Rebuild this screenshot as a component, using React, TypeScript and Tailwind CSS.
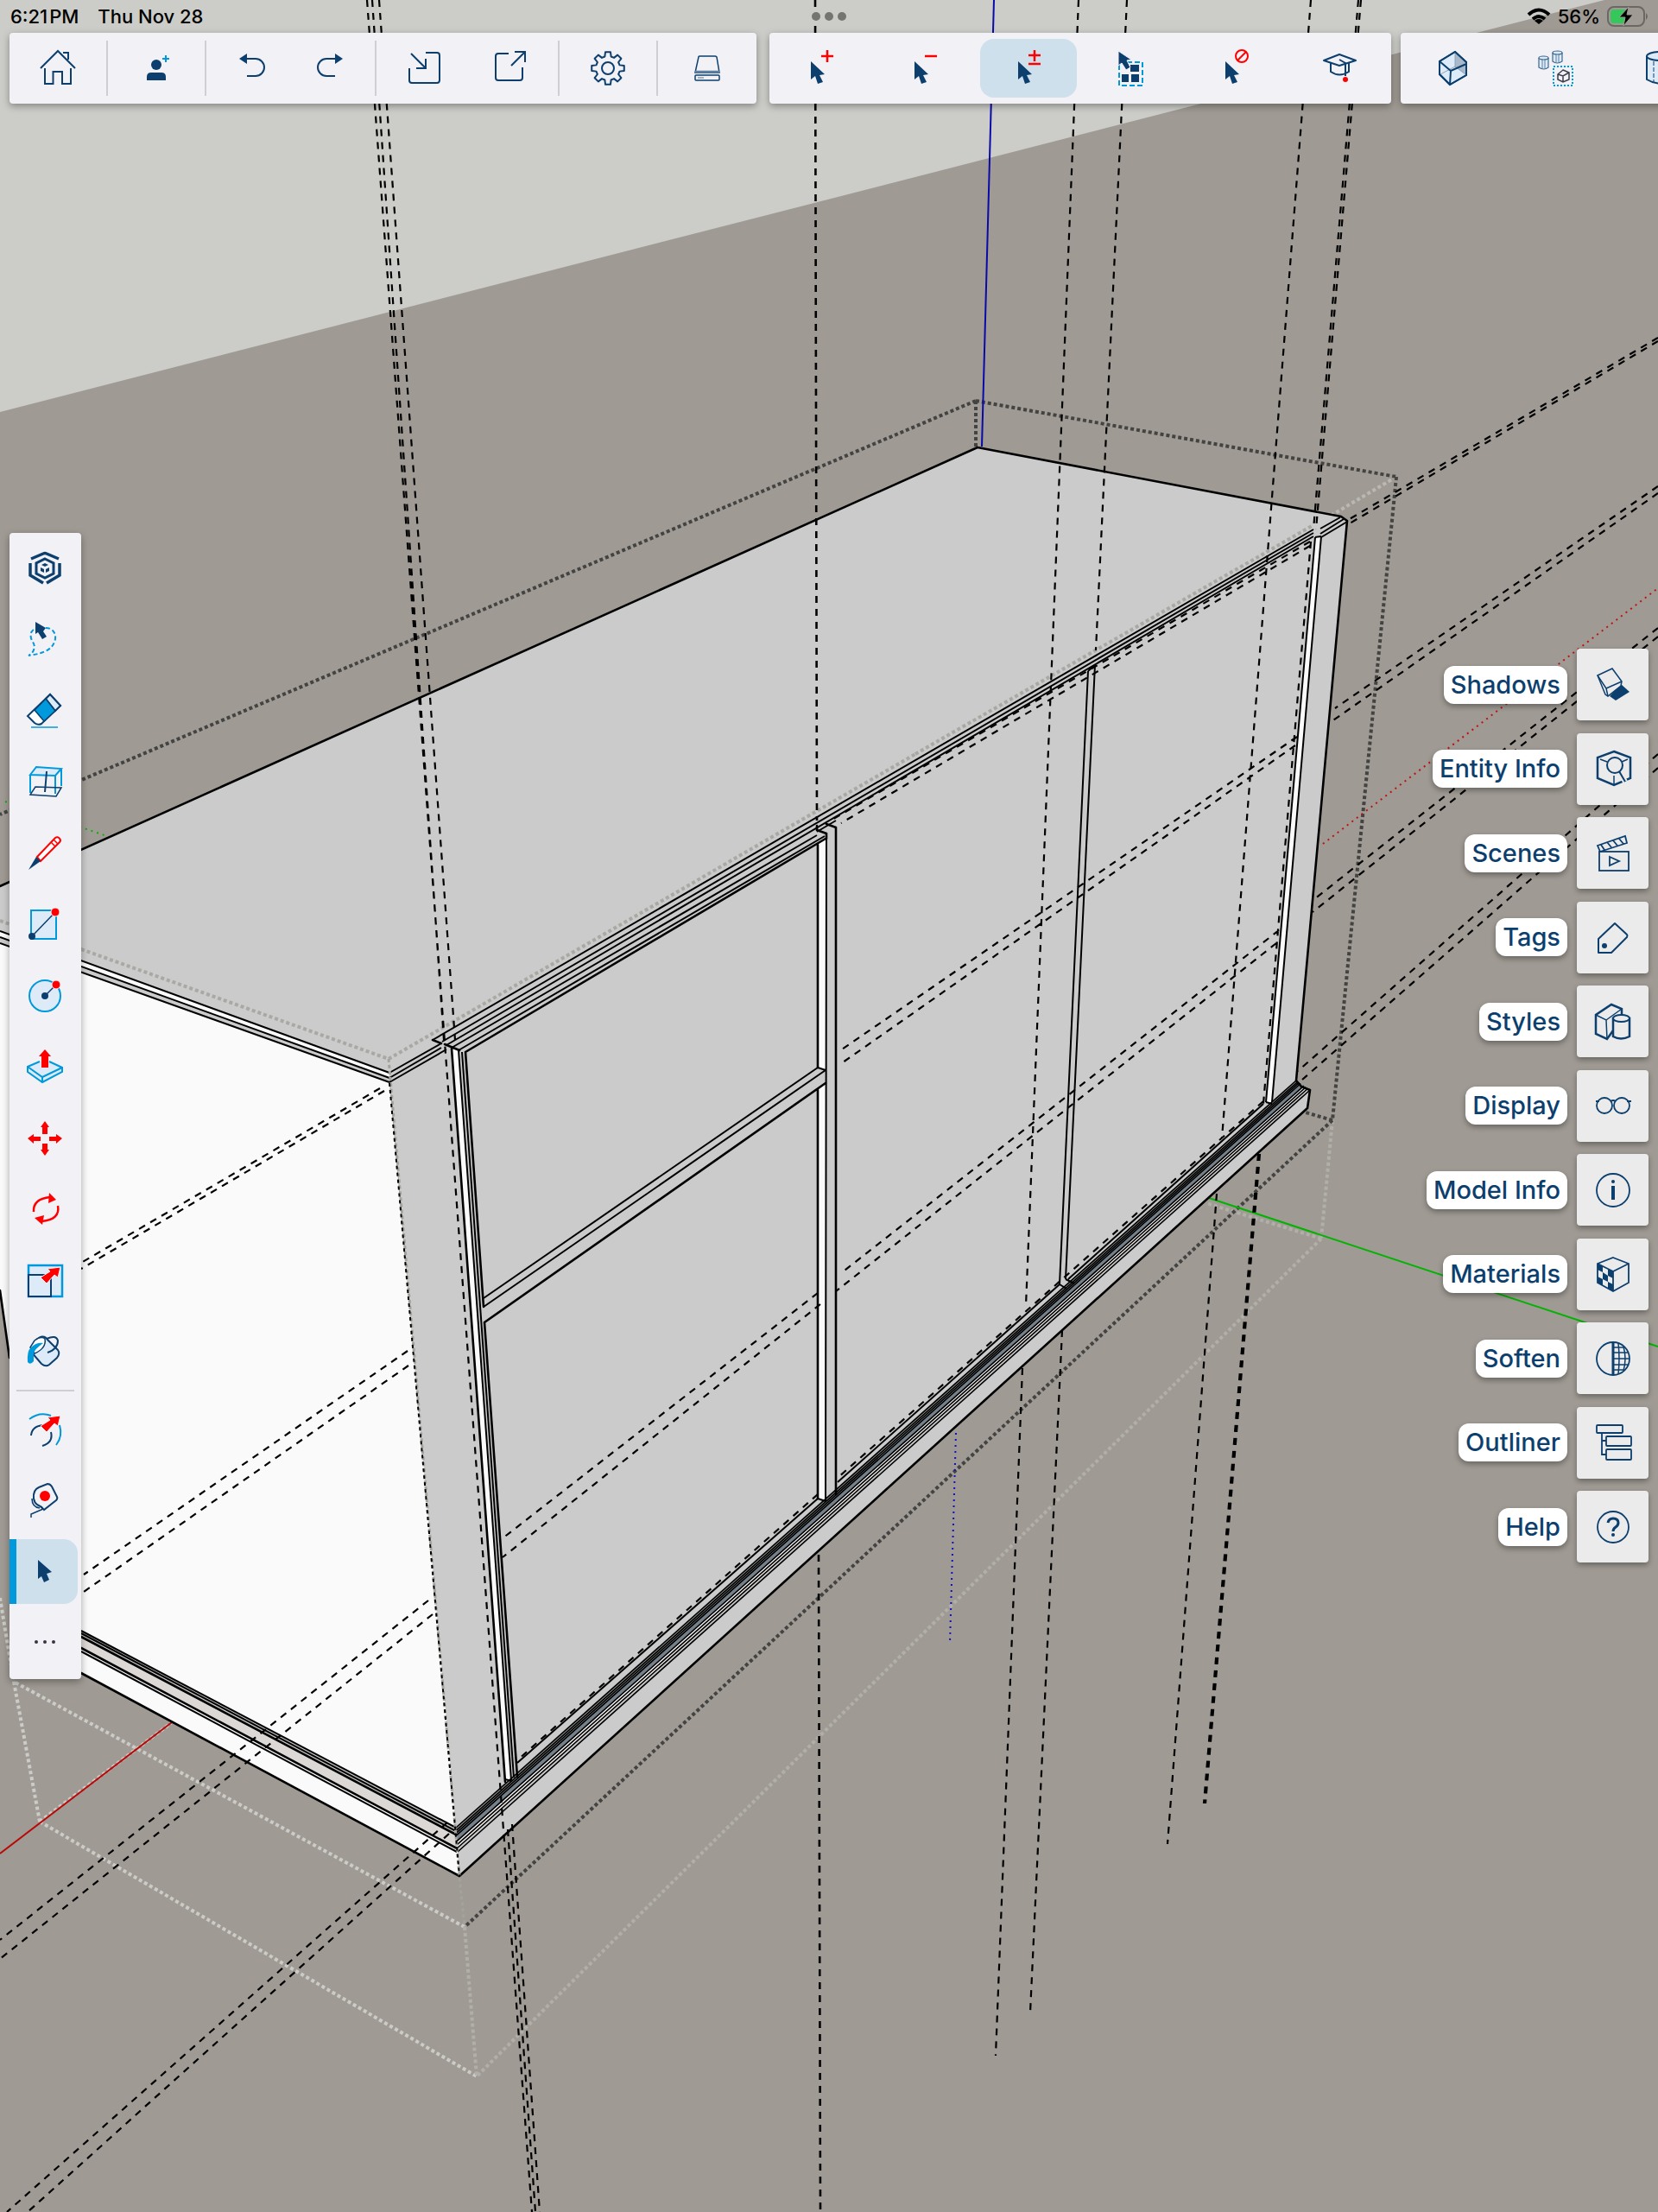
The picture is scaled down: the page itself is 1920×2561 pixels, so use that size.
import type { ReactNode } from "react";
import { clsx } from "clsx";

const NAVY = "#0c3f6e";
const SKY = "#0099dc";
const RED = "#ff0000";
const PALE = "#dcebf7";

type Tool = { label: string; icon: ReactNode; active?: boolean };

function Icon({ children }: { children: ReactNode }) {
  return (
    <svg
      viewBox="0 0 48 48"
      className="size-12 shrink-0 overflow-visible"
      fill="none"
      stroke={NAVY}
      strokeWidth="2"
      aria-hidden="true"
    >
      {children}
    </svg>
  );
}

// ---------- model drawing ----------

type Seg = [number, number, number, number];

const segs = (list: Seg[]) => list.map(([a, b, c, d]) => `M${a} ${b}L${c} ${d}`).join("");

const thinEdges: Seg[] = [
  // left top trim
  [0, 1078, 451, 1242],
  [0, 1085, 451, 1248],
  [0, 1092, 451, 1253],
  [451, 1242, 511, 1208],
  [451, 1248, 511, 1213],
  [451, 1253, 517, 1215],
  // long top trim
  [501, 1204, 1521, 613],
  [512, 1206, 1521, 617],
  [517, 1210, 1521, 621],
  [523, 1213, 946, 967],
  [531, 1216, 955, 968],
  [1529, 612, 1552, 599],
  [1529, 618, 1556, 601],
  [1530, 622, 1560, 604],
  // left stile
  [531, 1216, 592, 2061],
  [535, 1218, 595, 2058],
  [585, 2060, 592, 2062],
  // rail
  [560, 1503, 947, 1236],
  [560, 1513, 956, 1239],
  [947, 1236, 956, 1239],
  // middle stile
  [957, 970, 956, 1738],
  [947, 1735, 956, 1738],
  [946, 963, 968, 950],
  // far mullion
  [1260, 777, 1227, 1487],
  [1268, 770, 1234, 1481],
  [1260, 777, 1268, 770],
  [1227, 1487, 1235, 1492],
  [1234, 1481, 1244, 1486],
  // right stile
  [1523, 622, 1466, 1276],
  [1530, 621, 1473, 1276],
  [1523, 622, 1530, 621],
  [1466, 1276, 1473, 1278],
  // panel sills
  [599, 2041, 947, 1735],
  [970, 1716, 1227, 1487],
  [1237, 1481, 1463, 1278],
  // bottom left trim
  [94, 1888, 528, 2116],
  [94, 1891, 528, 2120],
  [94, 1912, 529, 2144],
];

const boldEdges: Seg[] = [
  [0, 1026, 1132, 518],
  [1132, 518, 1553, 598],
  [1553, 598, 1560, 603],
  [1560, 603, 1501, 1251],
  [523, 1214, 585, 2063],
  [539, 1218, 560, 1513],
  [561, 1531, 599, 2057],
  [539, 1218, 956, 971],
  [561, 1531, 956, 1254],
  [968, 958, 968, 1730],
  [946, 956, 946, 961],
  [946, 961, 957, 965],
  [957, 965, 957, 971],
  [957, 954, 968, 958],
  [947, 978, 947, 1236],
  [947, 1262, 947, 1735],
  [94, 1895, 528, 2124],
  [94, 1908, 529, 2140],
  [94, 1937, 532, 2172],
  [532, 2172, 1514, 1283],
  [1514, 1283, 1517, 1262],
  [1517, 1262, 1507, 1258],
  [1507, 1258, 1501, 1251],
  [0, 1494, 11, 1572],
  [501, 1204, 511, 1208],
  [515, 1209, 532, 1216],
];

const guides: Seg[] = [
  // left trio
  [425, 0, 616, 2561],
  [431, 0, 514, 1204],
  [439, 0, 527, 1204],
  [588, 2118, 620, 2561],
  [593, 2112, 625, 2561],
  // verticals to the right
  [1249, 0, 1188, 1512],
  [1184, 1584, 1153, 2380],
  [1305, 0, 1269, 753],
  [1230, 1540, 1193, 2330],
  [1518, 0, 1415, 1318],
  [1409, 1382, 1352, 2135],
  [1573, 0, 1521, 613],
  [1576, 0, 1524, 613],
  [1518, 627, 1463, 1278],
  [1457, 1336, 1394, 2088],
  [1459, 1336, 1396, 2088],
  // receding pairs on the right
  [1920, 391, 1561, 602],
  [1920, 395, 1563, 606],
  [1920, 563, 1546, 820],
  [1920, 571, 1541, 836],
  [1920, 727, 1522, 1041],
  [1920, 737, 1520, 1056],
  [1920, 873, 1503, 1240],
  [1920, 889, 1508, 1250],
  // inside the front
  [1517, 627, 960, 951],
  [1517, 632, 974, 953],
  [1502, 853, 972, 1217],
  [1500, 863, 976, 1230],
  [1481, 1077, 974, 1474],
  [1478, 1092, 968, 1495],
  [947, 1497, 582, 1781],
  [950, 1510, 582, 1803],
  [947, 1730, 599, 2038],
  [1463, 1275, 970, 1711],
  // inside the end panel
  [440, 1260, 94, 1462],
  [445, 1263, 94, 1469],
  [472, 1564, 97, 1823],
  [473, 1581, 94, 1845],
  [496, 1853, 0, 2246],
  [501, 1869, 0, 2268],
  [518, 2110, 8, 2561],
  [520, 2123, 32, 2561],
];

const darkBounds: Seg[] = [
  [1130, 464, 1617, 552],
  [1130, 464, 1130, 518],
  [1130, 464, 0, 943],
  [1617, 552, 1543, 1297],
  [1543, 1297, 538, 2231],
  [1543, 1297, 1512, 1288],
];

const lightBounds: Seg[] = [
  [1543, 1297, 1530, 1434],
  [1530, 1434, 1397, 1393],
  [1530, 1434, 552, 2404],
  [538, 2231, 552, 2404],
];

const paleBounds: Seg[] = [
  [538, 2231, 16, 1947],
  [0, 1850, 16, 1947],
  [16, 1947, 46, 2109],
  [46, 2109, 552, 2404],
  [46, 2109, 198, 1995],
];

const topBounds: Seg[] = [
  [0, 1066, 94, 1099],
  [94, 1099, 450, 1226],
  [450, 1226, 1060, 873],
  [1060, 873, 1519, 609],
];

// sill profile: each line runs between the front corner and the far end
const sill = (t: number): Seg => [528 + 2 * t, 2116 + 28 * t, 1501 + 16 * t, 1251 + 11 * t];

const sillBand = (from: number, to: number) => {
  const a = sill(from);
  const b = sill(to);
  return `${a[0]},${a[1]} ${a[2]},${a[3]} ${b[2]},${b[3]} ${b[0]},${b[1]}`;
};

function ModelView() {
  return (
    <svg
      viewBox="0 0 1920 2561"
      preserveAspectRatio="xMidYMin slice"
      className="absolute inset-0 h-full w-full"
      fill="none"
      role="img"
      aria-label="Cabinet model"
    >
      <rect width="1920" height="2561" fill="#9f9a93" />
      <polygon points="0,0 1858,0 0,477" fill="#cccdc8" />

      <path d={segs(paleBounds)} stroke="#cbcbc8" strokeWidth="4" strokeDasharray="4 3" />
      <path d={segs(lightBounds)} stroke="#b1afa9" strokeWidth="4" strokeDasharray="4 3" />
      <path d="M1617 552L1519 610" stroke="#b9b8b3" strokeWidth="4" strokeDasharray="4 3" />
      <path d={segs(darkBounds)} stroke="#434342" strokeWidth="4" strokeDasharray="4 3" />

      {/* axes */}
      <path d="M0 2146L199 1994" stroke="#b80808" strokeWidth="2" />
      <path d="M1532 977L1920 681" stroke="#c01010" strokeWidth="2" strokeDasharray="2 5" />
      <path d="M1400 1387L1920 1559" stroke="#00b400" strokeWidth="2" />
      <path d="M6 928L124 968" stroke="#00b400" strokeWidth="2" strokeDasharray="2 5" />
      <path d="M1151 0L1137 517" stroke="#0a0aa8" strokeWidth="2" />
      <path d="M1107 1659L1100 1902" stroke="#1010c8" strokeWidth="2" strokeDasharray="2 5" />

      {/* body */}
      <polygon
        points="0,1026 1132,518 1553,598 1560,603 1501,1251 1517,1262 1514,1283 532,2172 451,1242 0,1078"
        fill="#cbcbcb"
      />
      <polygon
        points="0,1092 451,1253 528,2116 532,2172 94,1937 60,1900 11,1572 0,1494"
        fill="#fafafa"
      />
      <polygon points="0,1078 451,1242 451,1248 0,1085" fill="#fafafa" />
      <polygon points="0,1085 451,1248 451,1253 0,1092" fill="#cbcbcb" />
      <polygon points="94,1888 528,2116 528,2124 94,1896" fill="#c9c7c6" />
      <polygon points="94,1896 528,2124 529,2140 94,1908" fill="#dcd8d6" />
      <polygon points="523,1214 531,1216 592,2061 585,2063" fill="#fafafa" />
      <polygon points="947,977 957,971 956,1239 947,1236" fill="#fafafa" />
      <polygon points="947,1262 956,1254 956,1738 947,1735" fill="#fafafa" />
      <polygon points="1523,622 1530,621 1473,1276 1466,1276" fill="#fafafa" />

      {/* sill */}
      <polygon points={sillBand(0, 0.3)} fill="#8d8f8f" />
      <polygon points={sillBand(0.3, 0.58)} fill="#74818b" />
      <polygon points={sillBand(0.58, 0.84)} fill="#f0eeec" />
      <path
        d={segs([0, 0.12, 0.22, 0.32, 0.56, 0.7, 0.84, 1].map(sill))}
        stroke="#000"
        strokeWidth="1.6"
      />

      <path d={segs(topBounds)} stroke="#a9a9a4" strokeWidth="4" strokeDasharray="4 3" />
      <path d={segs(thinEdges)} stroke="#000" strokeWidth="2" />
      <path d={segs(boldEdges)} stroke="#000" strokeWidth="2.6" strokeLinecap="round" />

      <path d="M450 1226L532 2172L538 2231" stroke="#a3a39e" strokeWidth="3" strokeDasharray="4 3" />
      <path d="M451 1254L532 2172" stroke="#000" strokeWidth="2" strokeDasharray="4 4" />

      <path d={segs(guides)} stroke="#000" strokeWidth="2.2" strokeDasharray="8 7" />
      <path
        d="M944 0L946 950M948 1800L950 2561"
        stroke="#000"
        strokeWidth="2.6"
        strokeDasharray="8 7"
      />
    </svg>
  );
}

// ---------- icons ----------

const gearPath = (() => {
  const pts: string[] = [];
  for (let i = 0; i < 8; i++) {
    [
      [-15, 14],
      [-9, 19],
      [9, 19],
      [15, 14],
    ].forEach(([deg, r]) => {
      const a = ((i * 45 + deg) * Math.PI) / 180;
      pts.push(`${(24 + r * Math.sin(a)).toFixed(2)} ${(24 - r * Math.cos(a)).toFixed(2)}`);
    });
  }
  return `M${pts.join("L")}Z`;
})();

const cursor = <path d="M12 16V37L17 33L20 42L26 40L22 32L28 31Z" fill={NAVY} stroke="none" />;

const redArrow = (
  <path d="M42 8L39 20L35 17L26 27L19 20L30 13L27 10Z" fill={RED} stroke="#f2f1f6" strokeWidth="1" />
);

const fileGroups: Tool[][] = [
  [
    {
      label: "Home",
      icon: (
        <>
          <path d="M4 24L24 4L44 24M30 6H36V14" />
          <path d="M9 24V42H18.5V28H29V42H39V24" />
        </>
      ),
    },
  ],
  [
    {
      label: "Account",
      icon: (
        <>
          <circle cx="24" cy="20" r="6" fill={NAVY} stroke="none" />
          <path d="M13 38V34Q13 29 18 29H30Q35 29 35 34V38Z" fill={NAVY} stroke="none" />
          <path d="M31 13H39M35 9V17" stroke={SKY} />
        </>
      ),
    },
  ],
  [
    {
      label: "Undo",
      icon: (
        <>
          <path d="M17 13H28A10 10 0 0 1 28 33H18" />
          <path d="M9 13L18 7V19Z" fill={NAVY} stroke="none" />
        </>
      ),
    },
    {
      label: "Redo",
      icon: (
        <>
          <path d="M31 13H20A10 10 0 0 0 20 33H30" />
          <path d="M39 13L30 7V19Z" fill={NAVY} stroke="none" />
        </>
      ),
    },
  ],
  [
    {
      label: "Import",
      icon: <path d="M26 6H39Q42 6 42 9V38Q42 41 39 41H10Q7 41 7 38V24M9 7L26 24M26 13V24H15" />,
    },
    {
      label: "Export",
      icon: <path d="M22 7H10Q7 7 7 10V35Q7 38 10 38H35Q38 38 38 35V23M25 21L41 5M29 5H41V17" />,
    },
  ],
  [
    {
      label: "Settings",
      icon: (
        <>
          <path d={gearPath} strokeLinejoin="round" />
          <circle cx="24" cy="24" r="7" />
        </>
      ),
    },
  ],
  [
    {
      label: "Storage",
      icon: (
        <>
          <path d="M14 11Q14 10 15 10H33Q34 10 35 11L38 29H10Z" strokeWidth="1.5" />
          <path d="M10 28H38" strokeWidth="2.5" stroke="#5a7fa0" />
          <rect x="10" y="32" width="28" height="6" rx="1" strokeWidth="1.5" />
          <path d="M13 35H20" stroke="#9db3c9" strokeWidth="2" />
        </>
      ),
    },
  ],
];

const selectTools: Tool[] = [
  {
    label: "Add to selection",
    icon: (
      <>
        {cursor}
        <path d="M24 10H38M31 3V17" stroke={RED} strokeWidth="2.5" />
      </>
    ),
  },
  {
    label: "Subtract from selection",
    icon: (
      <>
        {cursor}
        <path d="M24 10H38" stroke={RED} strokeWidth="2.5" />
      </>
    ),
  },
  {
    label: "Toggle selection",
    active: true,
    icon: (
      <>
        {cursor}
        <path d="M24 9H38M31 3V16M24 19H38" stroke={RED} strokeWidth="2.5" />
      </>
    ),
  },
  {
    label: "Select all",
    icon: (
      <>
        <rect x="9" y="17" width="27" height="27" stroke={SKY} strokeDasharray="6 3" />
        <path d="M22 20H32V28H22ZM12 31H20V40H12ZM23 31H32V40H23Z" fill={NAVY} stroke="none" />
        <path
          d="M8 4V21L12 18L17 26L22 23L18 15L23 14Z"
          fill={NAVY}
          stroke="#f2f1f6"
          strokeWidth="1"
        />
      </>
    ),
  },
  {
    label: "Select none",
    icon: (
      <>
        {cursor}
        <circle cx="31" cy="10" r="7" stroke={RED} />
        <path d="M26 15L36 5" stroke={RED} />
      </>
    ),
  },
  {
    label: "Instructor",
    icon: (
      <>
        <path d="M6 15L24 8L43 15L24 21Z" strokeLinejoin="round" />
        <path d="M14 18V28Q24 35 35 28V18M24 14L31 18V33" />
        <circle cx="31" cy="37" r="3" fill={RED} stroke="none" />
      </>
    ),
  },
];

const viewTools: Tool[] = [
  {
    label: "X-ray",
    icon: (
      <>
        <path d="M27 5L40 17V32L21 43L9 31V16Z" fill={PALE} />
        <path d="M27 5V22L40 32L39 17Z" fill="#a9b9c9" stroke="none" />
        <path d="M27 6V22L10 31M27 22L39 31" stroke="#8ea3b8" strokeWidth="1" />
        <path d="M27 5L40 17V32L21 43L9 31V16ZM9 16L22 27L40 19M22 27L21 43" strokeLinejoin="round" />
      </>
    ),
  },
  {
    label: "Components",
    icon: (
      <>
        <g stroke="#3d668c" fill={PALE} strokeWidth="1.2">
          <path d="M4 12V23Q10 27 15 23V12" />
          <ellipse cx="9.5" cy="12" rx="5.5" ry="2" />
          <path d="M20 6V16Q25 20 31 16V6" />
          <ellipse cx="25.5" cy="6" rx="5.5" ry="2" />
          <path d="M8 14V24M11 14V24M24 8V17M27 8V17" strokeWidth="0.8" />
        </g>
        <rect x="21" y="22" width="22" height="22" stroke={SKY} strokeDasharray="2 2" />
        <path
          d="M32 26L39 29V37L32 40L26 37V31ZM26 31L32 33L39 29M32 33V40"
          stroke="#3c3c4c"
          strokeWidth="1.5"
        />
      </>
    ),
  },
  {
    label: "Solid tools",
    icon: (
      <>
        <path d="M9 10V37Q24 46 39 37V10" fill={PALE} />
        <ellipse cx="24" cy="10" rx="15" ry="5" fill={PALE} />
        <path d="M17 16V40" strokeDasharray="5 2" strokeWidth="1" />
      </>
    ),
  },
];

const drawTools: Tool[] = [
  {
    label: "Diagnostics",
    icon: (
      <>
        <path d="M8 13L22 7Q24 6 26 7L40 13" strokeWidth="3.5" />
        <path d="M7 18V32L22 41M41 18V32L26 41" strokeWidth="3.5" />
        <path d="M24 13L34 18V30L24 35L14 30V18Z" strokeWidth="3" />
        <path d="M24 18L28 20L24 22L20 20ZM19 23L23 25V29L19 27ZM29 23L25 25V29L29 27Z" fill={NAVY} stroke="none" />
      </>
    ),
  },
  {
    label: "Lasso",
    icon: (
      <>
        <path
          d="M25 11C32 11 37 16 36 24C34 33 28 40 5 43C11 40 13 34 11 29C8 25 6 18 9 15Q11 12 14 12"
          stroke={SKY}
          strokeDasharray="5 3"
        />
        <path d="M13 4V18L16 16L21 24L26 21L22 15L25 11Z" fill={NAVY} stroke="none" />
      </>
    ),
  },
  {
    label: "Eraser",
    icon: (
      <>
        <path d="M30 5L42 18L20 39Q16 41 12 38L4 30Z" fill="#fff" />
        <path d="M25 10L30 5L42 18L36 24Z" fill={PALE} />
        <path d="M12 23L25 10L36 24L23 36Z" fill={SKY} strokeWidth="1.5" />
        <path d="M8 43H39" stroke={SKY} strokeWidth="1.5" />
      </>
    ),
  },
  {
    label: "Section",
    icon: (
      <>
        <path d="M7 16L14 7L43 9L36 17Z" fill={PALE} stroke={SKY} />
        <path d="M7 16V37M36 17V38M43 9V29" stroke={SKY} />
        <path d="M13 30L7 39L37 41L43 31Z" strokeWidth="1.5" />
        <path d="M26 12Q25 25 24 36" strokeWidth="2" />
      </>
    ),
  },
  {
    label: "Pencil",
    icon: (
      <>
        <path d="M15 28L36 6Q39 4 41 7Q43 9 41 11L19 33Z" fill="#fff" stroke={RED} />
        <path d="M31 11L36 16M34 8L39 13" stroke={RED} strokeWidth="1.5" />
        <path d="M5 43L14 28L19 33Z" fill={NAVY} stroke="none" />
      </>
    ),
  },
  {
    label: "Rectangle",
    icon: (
      <>
        <rect x="8" y="8" width="29" height="33" fill={PALE} stroke={SKY} />
        <path d="M9 38L36 10" strokeWidth="1.5" />
        <circle cx="9" cy="38" r="4" fill={NAVY} stroke="none" />
        <circle cx="36" cy="10" r="5" fill={RED} stroke="#f2f1f6" strokeWidth="1" />
      </>
    ),
  },
  {
    label: "Circle",
    icon: (
      <>
        <circle cx="24" cy="24" r="18" fill={PALE} stroke={SKY} />
        <path d="M24 24L36 12" strokeWidth="1.5" />
        <circle cx="24" cy="24" r="4" fill={NAVY} stroke="none" />
        <circle cx="37" cy="11" r="5" fill={RED} stroke="#f2f1f6" strokeWidth="1" />
      </>
    ),
  },
  {
    label: "Push/Pull",
    icon: (
      <>
        <path d="M18 18L4 24V30L21 42L44 30V25L29 18" fill={PALE} stroke={SKY} />
        <path d="M4 24L21 36L44 25M21 36V42" stroke={SKY} />
        <path d="M24 4L31 12H28V25H20V12H17Z" fill={RED} stroke="none" />
      </>
    ),
  },
  {
    label: "Move",
    icon: (
      <path
        d="M24 4L29 11H27V19H21V11H19ZM24 44L29 37H27V30H21V37H19ZM4 24L11 19V22H19V27H11V30ZM44 24L37 19V22H29V27H37V30Z"
        fill={RED}
        stroke="none"
      />
    ),
  },
  {
    label: "Rotate",
    icon: (
      <>
        <path d="M11 27Q10 12 30 10M39 20Q42 36 20 38" stroke={RED} strokeWidth="2.5" />
        <path d="M29 5L37 13L28 17ZM23 31L12 34L21 42Z" fill={RED} stroke="none" />
      </>
    ),
  },
  {
    label: "Scale",
    icon: (
      <>
        <rect x="5" y="6" width="39" height="36" fill={PALE} stroke={SKY} strokeWidth="2.5" />
        <rect x="5" y="17" width="26" height="25" fill={PALE} />
        {redArrow}
      </>
    ),
  },
  {
    label: "Paint",
    icon: (
      <>
        <path d="M12 12Q22 2 27 10L39 22Q42 26 38 31L29 39Q25 42 20 38L8 24Z" fill={PALE} />
        <path d="M12 26Q26 20 24 9Q20 5 12 11L7 19Z" fill="#fff" strokeWidth="1.5" />
        <path d="M4 36Q3 23 8 19Q14 13 22 14Q12 21 11 26V35Q7 40 4 36Z" fill={SKY} stroke="none" />
        <path d="M26 9Q37 4 39 11Q39 21 27 25" strokeWidth="2" />
      </>
    ),
  },
];

const moreTools: Tool[] = [
  {
    label: "Offset",
    icon: (
      <>
        <path d="M6 12Q18 3 31 8M41 19Q45 32 37 42" stroke={SKY} />
        <path d="M8 31Q9 20 22 19M31 27Q34 39 21 43" />
        {redArrow}
      </>
    ),
  },
  {
    label: "Tape measure",
    icon: (
      <>
        <path d="M11 22Q10 12 17 9L27 5Q30 5 32 8L38 20Q39 22 37 24L23 35Q20 31 15 29Q12 27 11 22Z" />
        <circle cx="24" cy="19" r="6" fill={RED} stroke="none" />
        <path d="M9 22Q9 32 18 33M22 34L8 40V44" strokeWidth="1.5" />
      </>
    ),
  },
  {
    label: "Select",
    active: true,
    icon: <path d="M16 11V33L20 30L23 37L29 34L26 27L32 25Z" fill={NAVY} stroke="none" />,
  },
  {
    label: "More tools",
    icon: (
      <g fill="#3a3344" stroke="none">
        <circle cx="14" cy="24" r="2" />
        <circle cx="24" cy="24" r="2" />
        <circle cx="34" cy="24" r="2" />
      </g>
    ),
  },
];

const panels: Tool[] = [
  {
    label: "Shadows",
    icon: (
      <>
        <path d="M33 23L43 32L27 42L20 37Z" fill={NAVY} stroke="none" />
        <path d="M6 13L23 5L34 20L33 25L18 37L15 35Z" fill="#ebebeb" strokeWidth="1.5" />
        <path d="M6 13L16 28L34 20M16 28L18 37" strokeWidth="1.5" />
      </>
    ),
  },
  {
    label: "Entity Info",
    icon: (
      <>
        <path d="M25 4L44 11V35L25 43L6 35V11Z" strokeWidth="2.5" />
        <path d="M9 13L17 16M41 13L34 16M25 32V43" strokeWidth="1.5" />
        <path d="M31 27L38 39" stroke="#ebebeb" strokeWidth="6" />
        <circle cx="26" cy="20" r="9" fill="#ebebeb" />
        <path d="M31 27L38 39" />
      </>
    ),
  },
  {
    label: "Scenes",
    icon: (
      <g strokeWidth="1.8">
        <rect x="8" y="22" width="34" height="22" />
        <path d="M20 28L31 33L20 38Z" />
        <path d="M6 15L38 4L40 12L9 22ZM10 14L14 20M17 11L22 17M24 9L29 15M31 7L36 13" />
      </g>
    ),
  },
  {
    label: "Tags",
    icon: (
      <>
        <path d="M26 8L40 21Q41 22 40 24L22 42H7V26Z" strokeLinejoin="round" />
        <circle cx="14" cy="34" r="3" fill={NAVY} stroke="none" />
      </>
    ),
  },
  {
    label: "Styles",
    icon: (
      <>
        <path d="M22 4L34 9V20L17 44L4 38V16Z" strokeWidth="2.5" />
        <path d="M4 16L16 22L34 9M16 22L17 44" strokeWidth="1.5" />
        <path d="M24 20V41Q33 46 43 41V20Z" fill="#ebebeb" strokeWidth="2.5" />
        <ellipse cx="33.5" cy="20" rx="9.5" ry="4" fill="#ebebeb" />
      </>
    ),
  },
  {
    label: "Display",
    icon: (
      <g strokeWidth="1.8">
        <circle cx="14" cy="24" r="9" />
        <circle cx="34" cy="24" r="9" />
        <path d="M4 19H8M40 19H45M21 19Q24 17 27 19" />
      </g>
    ),
  },
  {
    label: "Model Info",
    icon: (
      <>
        <circle cx="24" cy="24" r="19" strokeWidth="1.8" />
        <circle cx="24" cy="14" r="2" fill={NAVY} stroke="none" />
        <path d="M24 19V35" strokeWidth="4" />
      </>
    ),
  },
  {
    label: "Materials",
    icon: (
      <>
        <path d="M24 5L42 12V34L24 44L6 34V12Z" strokeWidth="1.8" />
        <path d="M6 12L24 21L42 12M24 21V44" strokeWidth="1.8" />
        <path
          d="M6 12L12 15V22L6 19ZM18 18L24 21V29L18 26ZM12 22L18 26V33L12 30ZM6 27L12 30V37L6 34ZM18 33L24 36V44L18 40Z"
          fill={NAVY}
          stroke="none"
        />
      </>
    ),
  },
  {
    label: "Soften",
    icon: (
      <>
        <circle cx="24" cy="24" r="19" strokeWidth="1.8" />
        <path d="M24 5V43" strokeWidth="3" />
        <path
          d="M24 11H37M24 17H41M24 24H43M24 31H41M24 37H37M30 6Q32 24 30 42M36 10Q40 24 36 38"
          strokeWidth="1.5"
        />
      </>
    ),
  },
  {
    label: "Outliner",
    icon: (
      <g strokeWidth="1.8">
        <rect x="5" y="4" width="30" height="9" rx="1" />
        <rect x="16" y="17" width="29" height="11" rx="1" />
        <rect x="16" y="32" width="29" height="12" rx="1" />
        <path d="M11 13V38H16M11 22H16" />
      </g>
    ),
  },
  {
    label: "Help",
    icon: (
      <>
        <circle cx="24" cy="24" r="18" strokeWidth="1.8" />
        <path d="M18 19Q19 14 24 14Q30 14 30 19Q30 22 27 24Q24 26 24 29" strokeWidth="3" />
        <circle cx="24" cy="33" r="2" fill={NAVY} stroke="none" />
      </>
    ),
  },
];

// ---------- chrome ----------

const barStyle = "bg-[#f2f1f6] rounded-[4px] shadow-[0_3px_8px_rgba(0,0,0,0.35)]";

function StatusBar() {
  return (
    <div className="grid h-[38px] grid-cols-3 items-center pr-[11px] pl-3 text-[22px] font-medium text-black">
      <div className="flex gap-[22px]">
        <span>6:21{"\u200a"}PM</span>
        <span>Thu Nov 28</span>
      </div>
      <div className="flex justify-center gap-[5px]">
        <span className="size-[10px] rounded-full bg-[#747470]" />
        <span className="size-[10px] rounded-full bg-[#747470]" />
        <span className="size-[10px] rounded-full bg-[#747470]" />
      </div>
      <div className="flex items-center justify-end gap-2">
        <svg viewBox="0 0 28 20" className="h-5 w-7" fill="none" stroke="#000" strokeWidth="4" aria-hidden="true">
          <path d="M2 8Q14 -3 26 8" />
          <path d="M7 13Q14 7 21 13" />
          <path d="M14 19L9 15Q14 11 19 15Z" fill="#000" stroke="none" />
        </svg>
        <span>56%</span>
        <svg viewBox="0 0 48 24" className="h-6 w-12" fill="none" aria-hidden="true">
          <rect x="1" y="1" width="42" height="22" rx="7" stroke="#6b6863" strokeWidth="2" />
          <path d="M8 4H21V20H8Q4 20 4 16V8Q4 4 8 4Z" fill="#34c759" />
          <path d="M45 8Q49 12 45 16Z" fill="#6b6863" />
          <path d="M25 1L14 13H21L19 23L30 10H23Z" fill="#000" stroke="#9f9a93" strokeWidth="1" />
        </svg>
      </div>
    </div>
  );
}

function TopBars() {
  return (
    <div className="flex pl-[11px]">
      <nav className={clsx("flex h-[82px] shrink-0 items-center", barStyle)} aria-label="File">
        {fileGroups.map((group, i) => (
          <div
            key={group[0].label}
            className={clsx(
              "flex h-[64px] items-center justify-center",
              i < fileGroups.length - 1 && "border-r-2 border-[#cfced3]",
              group.length === 1 && "w-[114px]",
              group[0].label === "Undo" && "w-[197px] gap-[42px]",
              group[0].label === "Import" && "w-[212px] gap-[52px]"
            )}
          >
            {group.map((tool) => (
              <button key={tool.label} type="button" aria-label={tool.label}>
                <Icon>{tool.icon}</Icon>
              </button>
            ))}
          </div>
        ))}
      </nav>
      <nav className={clsx("ml-[15px] flex h-[82px] shrink-0 items-center", barStyle)} aria-label="Selection">
        {selectTools.map((tool) => (
          <button
            key={tool.label}
            type="button"
            aria-label={tool.label}
            className={clsx(
              "mx-1 flex h-[68px] w-[112px] items-center justify-center rounded-2xl",
              tool.active && "bg-[#cee0ec]"
            )}
          >
            <Icon>{tool.icon}</Icon>
          </button>
        ))}
      </nav>
      <nav className={clsx("ml-[11px] flex h-[82px] shrink-0 items-center", barStyle)} aria-label="View">
        {viewTools.map((tool) => (
          <button
            key={tool.label}
            type="button"
            aria-label={tool.label}
            className="mx-1 flex h-[68px] w-[112px] items-center justify-center"
          >
            <Icon>{tool.icon}</Icon>
          </button>
        ))}
      </nav>
    </div>
  );
}

function SideButton({ tool }: { tool: Tool }) {
  return (
    <button
      type="button"
      aria-label={tool.label}
      className={clsx(
        "flex h-[75px] items-center",
        tool.active
          ? "mr-[4px] rounded-r-2xl border-l-8 border-[#0099dc] bg-[#cee0ec] pl-[9px]"
          : "pl-[17px]"
      )}
    >
      <Icon>{tool.icon}</Icon>
    </button>
  );
}

function ToolPalette() {
  return (
    <nav
      className={clsx("mt-[497px] flex h-[1327px] w-[83px] flex-col py-[3px]", barStyle)}
      aria-label="Drawing tools"
    >
      <div className="flex h-[983px] flex-col justify-between">
        {drawTools.map((tool) => (
          <SideButton key={tool.label} tool={tool} />
        ))}
      </div>
      <hr className="mx-2 mt-[6px] border-t-2 border-[#cfced3]" />
      <div className="mt-[6px] flex h-[322px] flex-col justify-between">
        {moreTools.map((tool) => (
          <SideButton key={tool.label} tool={tool} />
        ))}
      </div>
    </nav>
  );
}

function PanelList() {
  return (
    <ul className="mt-[631px] mr-[11px] flex h-[1058px] flex-col items-end justify-between">
      {panels.map((panel) => (
        <li key={panel.label}>
          <button type="button" className="flex items-center gap-[11px]">
            <span className="flex h-11 items-center rounded-xl bg-white px-2 text-[29px] font-medium text-[#0c3f6e] shadow-[0_3px_6px_rgba(0,0,0,0.35)]">
              {panel.label}
            </span>
            <span className="flex size-[83px] items-center justify-center rounded-[4px] bg-[#ebebeb] shadow-[0_3px_6px_rgba(0,0,0,0.35)]">
              <Icon>{panel.icon}</Icon>
            </span>
          </button>
        </li>
      ))}
    </ul>
  );
}

export default function App() {
  return (
    <main className="relative min-h-screen overflow-hidden bg-[#9f9a93] font-['Inter',sans-serif]">
      <ModelView />
      <div className="relative">
        <StatusBar />
        <TopBars />
        <div className="flex items-start justify-between pl-[11px]">
          <ToolPalette />
          <PanelList />
        </div>
      </div>
    </main>
  );
}
